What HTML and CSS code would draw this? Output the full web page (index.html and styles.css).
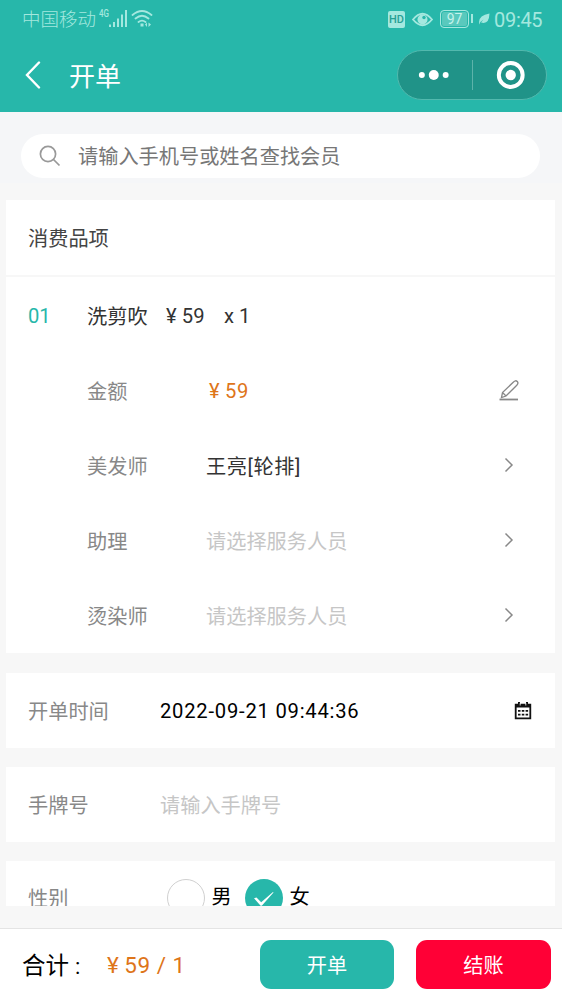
FILE: index.html
```html
<!DOCTYPE html>
<html lang="zh-CN">
<head>
<meta charset="utf-8">
<title>开单</title>
<link rel="stylesheet" href="styles.css">
</head>
<body>
<div class="app">
  <header class="header">
    <div class="status">
      <span class="carrier">中国移动</span>
      <svg class="signal" width="54" height="20" viewBox="0 0 54 20">
        <text class="net" x="0" y="8" textLength="10" lengthAdjust="spacingAndGlyphs">4G</text>
        <path class="fill" d="M10 15.500h2v2.500h-2zM14 13h2v5h-2zM18 9.500h2v8.500h-2zM22 5.500h2v12.500h-2zM26 1h2v17h-2z"/>
        <path class="line" d="M33.500 6Q43 -2 52.500 6M36.500 9.500Q43 4 49.500 9.500M39.500 13Q43 10.300 46.500 13"/>
        <path class="fill" d="M41.500 14.500h3v3h-3zM46 15.500l2-2v4.500zM49.500 13.500v4.500l2.500-2.500z"/>
      </svg>
      <div class="status-right">
        <span class="hd">HD</span>
        <svg width="21" height="17" viewBox="0 0 21 17"><path class="line" d="M1 8.500Q10.500 -3 20 8.500Q10.500 20 1 8.500z"/><circle class="fill" cx="10.500" cy="8.500" r="5"/><circle class="hole" cx="12" cy="6.500" r="1.700"/></svg>
        <span class="battery">97</span>
        <svg class="leaf" width="12" height="12" viewBox="0 0 12 12"><path class="fill" d="M1.500 11.500Q-1 3 11.500.500Q11 12 3 9.500L5.500 6.500Q2.500 8 1.500 11.500z"/></svg>
        <span class="clock">09:45</span>
      </div>
    </div>
    <div class="nav">
      <svg class="back" width="16" height="28" viewBox="0 0 16 28"><path d="M14 1.500L2 14L14 26.500"/></svg>
      <h1 class="title">开单</h1>
      <div class="capsule">
        <svg class="half" width="74" height="48" viewBox="0 0 74 48"><circle cx="24" cy="24" r="3"/><circle cx="36" cy="24" r="5"/><circle cx="48" cy="24" r="3"/></svg>
        <i class="divider"></i>
        <svg class="half" width="74" height="48" viewBox="0 0 74 48"><circle class="ring" cx="38" cy="24" r="12"/><circle cx="38" cy="24" r="5.200"/></svg>
      </div>
    </div>
  </header>

  <div class="search-band">
    <div class="search">
      <svg width="22" height="22" viewBox="0 0 22 22"><circle cx="9" cy="9" r="7.600"/><path d="M14.500 14.500L20.500 20.500"/></svg>
      <span>请输入手机号或姓名查找会员</span>
    </div>
  </div>

  <main class="content">
    <section class="card heading">消费品项</section>
    <section class="card item">
      <div class="row item-head">
        <span class="index">01</span><span class="name">洗剪吹</span><span class="price"><span class="yen">¥</span>59</span><span class="qty">x 1</span>
      </div>
      <div class="row">
        <span class="label">金额</span><span class="value amount"><span class="yen">¥</span>59</span>
        <svg class="edit" width="22" height="22" viewBox="0 0 22 22"><path d="M3.500 18.500L4.500 13.500L15.500 3Q17.500 .800 19.300 2.500Q20.800 4.200 18.800 6.200L8 17zM4.500 13.500L8 17"/><path class="base" d="M1.500 20.500h18.500"/></svg>
      </div>
      <div class="row">
        <span class="label">美发师</span><span class="value stylist">王亮[轮排]</span>
        <svg class="arrow" width="10" height="16" viewBox="0 0 10 16"><path d="M1.500 1.500L8 8L1.500 14.500"/></svg>
      </div>
      <div class="row">
        <span class="label">助理</span><span class="value empty">请选择服务人员</span>
        <svg class="arrow" width="10" height="16" viewBox="0 0 10 16"><path d="M1.500 1.500L8 8L1.500 14.500"/></svg>
      </div>
      <div class="row">
        <span class="label">烫染师</span><span class="value empty">请选择服务人员</span>
        <svg class="arrow" width="10" height="16" viewBox="0 0 10 16"><path d="M1.500 1.500L8 8L1.500 14.500"/></svg>
      </div>
    </section>

    <section class="card field">
      <span class="field-label">开单时间</span><span class="datetime">2022-09-21 09:44:36</span>
      <svg class="calendar" width="18" height="18" viewBox="0 0 18 18"><path d="M1.700 2.700h14.600v13.600h-14.600z"/><path class="solid" d="M1 2h16v3.500H1z"/><path class="solid" d="M4 0h2v3H4zM12 0h2v3h-2zM4 8h2.500v1.700H4zM7.800 8h2.500v1.700H7.800zM11.600 8h2.500v1.700h-2.500zM4 11.700h2.500v1.700H4zM7.800 11.700h2.500v1.700H7.800zM11.600 11.700h2.500v1.700h-2.500z"/><path class="notch" d="M6.200 1v2.500M11.800 1v2.500"/></svg>
    </section>

    <section class="card field">
      <span class="field-label">手牌号</span><span class="empty">请输入手牌号</span>
    </section>

    <section class="card gender">
      <span class="field-label gender-label">性别</span>
      <span class="radio"></span><span class="option">男</span>
      <span class="radio checked"><svg width="38" height="38" viewBox="0 0 38 38"><path d="M9 19.300L11.500 18.500L16.200 23.300L28 13L28.500 13.500L17 26.500Q16.200 27.200 15.400 26.500z"/></svg></span><span class="option">女</span>
    </section>
  </main>

  <footer class="footer">
    <span class="total">合计</span><span class="colon">:</span>
    <span class="sum"><span class="yen">¥</span>59 / 1</span>
    <button class="btn open">开单</button>
    <button class="btn pay">结账</button>
  </footer>
</div>
</body>
</html>
```
FILE: styles.css
```css
* { box-sizing: border-box; }
body {
  margin: 0;
  background: #f7f7f7;
  font-family: Roboto, "Noto Sans CJK SC", sans-serif;
  font-size: 20.2px;
  color: #333;
}
svg { display: block; flex: none; fill: none; }
span { white-space: nowrap; }
.app { width: 562px; height: 1000px; overflow: hidden; display: flex; flex-direction: column; }

.header { height: 112px; flex: none; background: #27b7aa; color: #fff; }
.status { height: 38px; padding: 0 19px 0 22px; display: flex; align-items: center; color: #a4e8df; }
.carrier { font-size: 18.500px; line-height: 34px; padding-top: 2px; font-weight: 300; width: 77px; }
.status .fill { fill: #a4e8df; }
.status .line { stroke: #a4e8df; stroke-width: 1.800; stroke-linecap: round; }
.status .hole { fill: #27b7aa; }
.net { fill: #a4e8df; font-size: 10px; font-weight: 500; }
.status-right { margin-left: auto; display: flex; align-items: center; }
.hd { width: 17px; height: 17px; margin-right: 7px; border-radius: 2px; background: #a4e8df; color: #27a094; font: 500 11px/17px Roboto, sans-serif; text-align: center; }
.battery { position: relative; width: 29px; height: 18px; margin: 0 9px 0 7px; border: 1.500px solid #a4e8df; border-radius: 4px; background: #59c9bd; box-shadow: inset 0 0 0 1px #27b7aa; font: 14px/16px Roboto, sans-serif; text-align: center; color: #c4f3ec; }
.battery::after { content: ""; position: absolute; right: -5px; top: 3px; width: 2px; height: 9px; background: #a4e8df; }
.leaf { margin-right: 4px; }
.clock { width: 49px; font-size: 20px; line-height: 36px; padding-top: 1px; font-weight: 400; letter-spacing: -.3px; }
.nav { height: 74px; display: flex; align-items: center; padding: 0 15px 0 25px; }
.back path { stroke: #fff; stroke-width: 2.400; stroke-linecap: round; }
.title { margin: 0 0 0 28px; padding-top: 3px; font-size: 26px; line-height: 40px; font-weight: 400; }
.capsule { display: flex; align-items: center; width: 150px; height: 50px; margin-left: auto; border: 1px solid #52b9ae; border-radius: 25px; background: #209388; }
.half circle { fill: #fff; }
.half .ring { fill: none; stroke: #fff; stroke-width: 4; }
.half { width: 73.500px; }
.divider { width: 1px; height: 30px; background: #5db3aa; }

.search-band { flex: none; height: 71px; padding: 22px 22px 0 21px; background: #f5f6f8; }
.search { height: 44px; border-radius: 22px; background: #fff; display: flex; align-items: center; gap: 17px; padding-left: 18px; color: #777; line-height: 40px; }
.search span { padding-top: 2px; }
.search svg { stroke: #999; stroke-width: 1.700; }

.content { height: 706px; margin-top: 17px; padding: 0 6px; flex: none; overflow: hidden; }
.card { width: 549px; background: #fff; }
.heading { height: 75px; padding: 4px 0 0 22px; line-height: 71px; color: #444; }
.item { margin-top: 2px; height: 376px; }
.row { height: 75px; padding: 0 36px 0 81px; display: flex; align-items: center; line-height: 40px; }
.row > span, .field > span { padding-top: 3px; }
.item-head { padding-left: 22px; height: 76px; }
.row > .name { padding-top: 4px; }
.row > .index, .row > .price, .row > .qty, .row > .amount, .field > .datetime { padding-top: 1px; }
.index { width: 59px; color: #27b7aa; }
.name { width: 79px; }
.price { width: 58px; letter-spacing: .2px; }
.yen { margin-right: 5px; }
.label { width: 119px; color: #888; }
.stylist { letter-spacing: .6px; }
.amount { padding-left: 3px; color: #de7519; letter-spacing: .5px; }
.empty { color: #c6c6c6; }
.arrow, .edit { margin-left: auto; stroke: #888; stroke-width: 1.500; }
.arrow { margin-right: 5px; margin-bottom: 2px; }
.edit { margin-right: -1px; margin-bottom: 2px; stroke-width: 1.300; }
.edit .base { stroke-width: 1.800; }
.field { height: 75px; margin-top: 19px; padding: 0 23px 0 22px; display: flex; align-items: center; line-height: 40px; }
.item + .field { margin-top: 20px; }
.field-label { width: 132px; color: #888; }
.datetime { color: #000; letter-spacing: .77px; }
.calendar { margin-left: auto; stroke: #111; stroke-width: 1.800; }
.calendar .solid { fill: #111; stroke: none; }
.calendar .notch { stroke: #fff; stroke-width: .8; }
.gender { height: 45px; margin-top: 19px; padding: 18px 0 0 22px; display: flex; line-height: 36px; }
.gender-label { width: 138.500px; padding-top: 2px; }
.radio { width: 38px; height: 38px; flex: none; border: 1.500px solid #d0d0d0; border-radius: 50%; }
.checked { border: 0; background: #27b7aa; }
.checked path { fill: #fff; }
.option { width: 33px; margin-left: 7px; color: #000; }

.footer { flex: 1; margin-top: 22px; border-top: 1px solid #e4e4e4; background: #fff; padding: 0 11px 0 22px; display: flex; align-items: center; color: #000; }
.total { font-size: 23.500px; line-height: 60px; padding-top: 3px; width: 53px; }
.colon { width: 32px; font-size: 22px; padding-top: 3px; }
.sum { font-size: 22.500px; color: #de7519; letter-spacing: .5px; }
.btn { width: 134px; height: 49px; border: 0; border-radius: 11px; background: #27b7aa; color: #fff; font: inherit; line-height: 45px; padding: 4px 0 0; }
.open { margin-left: auto; }
.pay { width: 135px; margin-left: 22px; background: #ff0036; }
```
